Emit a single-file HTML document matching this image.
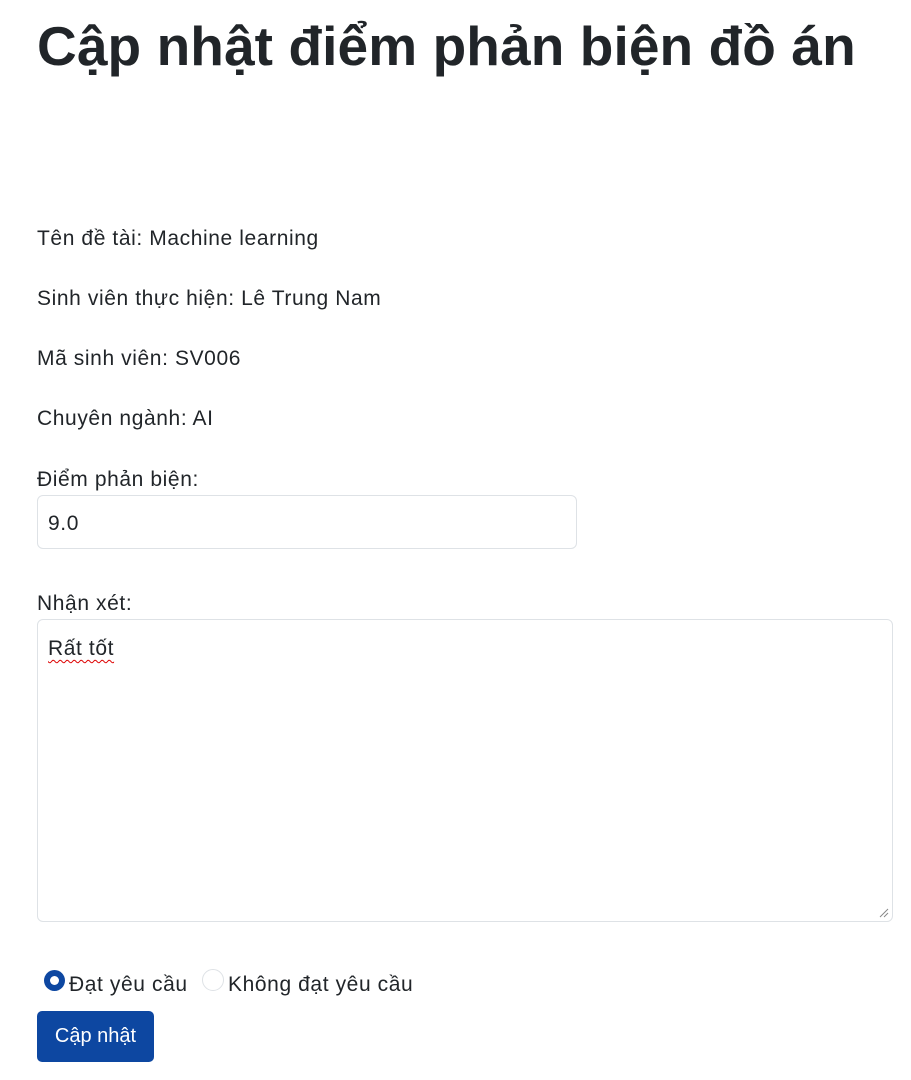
<!DOCTYPE html>
<html><head><meta charset="utf-8"><style>
body{margin:0;background:#fff;color:#212529;font-family:"Liberation Sans",sans-serif;width:911px;height:1080px;position:relative;overflow:hidden}
.a{position:absolute;white-space:nowrap}
h1{position:absolute;left:37px;top:11px;margin:0;font-size:55px;font-weight:bold;line-height:70px;white-space:nowrap;letter-spacing:0.1px}
.t{font-size:21px;line-height:24px;letter-spacing:0.6px}
.box{position:absolute;border:1px solid #dee2e6;border-radius:6px;box-sizing:border-box;background:#fff}
</style></head><body>
<h1>Cập nhật điểm phản biện đồ án</h1>
<div class="a t" style="left:37px;top:227px">Tên đề tài: Machine learning</div>
<div class="a t" style="left:37px;top:287px">Sinh viên thực hiện: Lê Trung Nam</div>
<div class="a t" style="left:37px;top:347px">Mã sinh viên: SV006</div>
<div class="a t" style="left:37px;top:407px">Chuyên ngành: AI</div>
<div class="a t" style="left:37px;top:468px">Điểm phản biện:</div>
<div class="box" style="left:37px;top:495px;width:540px;height:54px"></div>
<div class="a t" style="left:48px;top:512px">9.0</div>
<div class="a t" style="left:37px;top:592px">Nhận xét:</div>
<div class="box" style="left:37px;top:619px;width:856px;height:303px"></div>
<div class="a t" style="left:48px;top:637px;text-decoration:underline wavy #d00;text-decoration-thickness:1px;text-underline-offset:4px">Rất tốt</div>
<svg class="a" style="left:878px;top:907px" width="12" height="12"><path d="M2 10L10 2M6 10L10 6" stroke="#888" stroke-width="1"/></svg>
<div class="a" style="left:44px;top:970px;width:21px;height:21px;border-radius:50%;background:#0d47a1;box-sizing:border-box"></div>
<div class="a" style="left:50px;top:976px;width:9px;height:9px;border-radius:50%;background:#fff"></div>
<div class="a t" style="left:69px;top:973px">Đạt yêu cầu</div>
<div class="a" style="left:202px;top:969px;width:22px;height:22px;border-radius:50%;border:1px solid #dee2e6;box-sizing:border-box"></div>
<div class="a t" style="left:228px;top:973px">Không đạt yêu cầu</div>
<div class="a" style="left:37px;top:1011px;width:117px;height:51px;background:#0d47a1;border-radius:5px;color:#fff;font-size:20px;line-height:51px;text-align:center">Cập nhật</div>
</body></html>
